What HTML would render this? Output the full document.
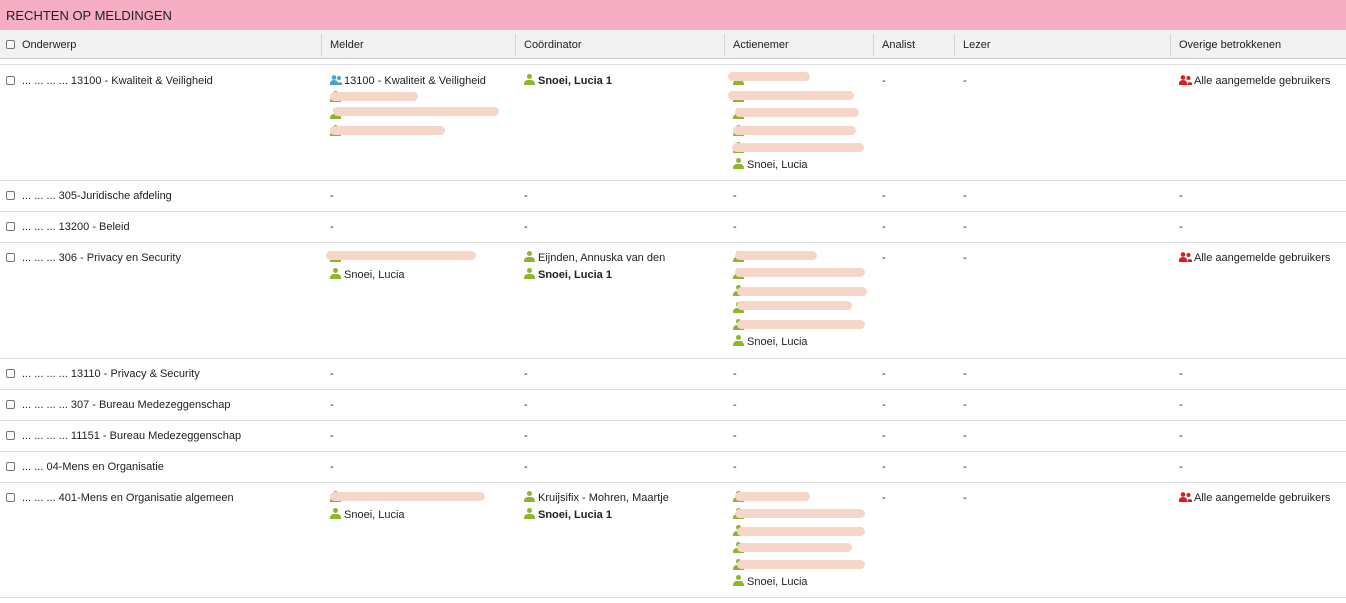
<!DOCTYPE html>
<html><head><meta charset="utf-8"><style>
*{margin:0;padding:0;box-sizing:border-box}
body{width:1346px;height:603px;background:#fff;font-family:"Liberation Sans",sans-serif;font-size:11px;color:#222;position:relative;overflow:hidden}
.a{position:absolute;white-space:nowrap;line-height:14px;margin-top:1px}
.cb{position:absolute;width:9px;height:9px;border:1px solid #777;border-radius:2px;background:#fff}
.hl{position:absolute;left:0;width:1346px;height:1px;background:#ddd}
.vl{position:absolute;top:34px;width:1px;height:22px;background:#d4d4d4}
.p{display:inline-block;width:11px;height:11px;vertical-align:-1px;margin-right:3px;position:relative}
.p:before{content:"";position:absolute;left:3px;top:0;width:5px;height:5px;border-radius:50%;background:#8fb530}
.p:after{content:"";position:absolute;left:0;top:6px;width:11px;height:5px;border-radius:4px 4px 0 0;background:#8fb530}
.r{position:absolute;height:9px;border-radius:5px;background:#f5d6c8}
b{font-weight:bold}
</style></head><body>
<div style="position:absolute;left:0;top:0;width:1346px;height:30px;background:#f5aec3"></div>
<div class="a" style="left:6px;top:7px;font-size:13px;line-height:16px;color:#222">RECHTEN OP MELDINGEN</div>
<div style="position:absolute;left:0;top:30px;width:1346px;height:29px;background:#f2f2f2;border-bottom:1px solid #ccc"></div>
<div class="hl" style="top:64px;background:#ddd"></div>
<div class="vl" style="left:321px"></div><div class="vl" style="left:515px"></div><div class="vl" style="left:724px"></div><div class="vl" style="left:873px"></div><div class="vl" style="left:954px"></div><div class="vl" style="left:1170px"></div>
<div class="cb" style="left:6px;top:40px"></div>
<div class="a" style="left:22px;top:37px">Onderwerp</div>
<div class="a" style="left:330px;top:37px">Melder</div>
<div class="a" style="left:524px;top:37px">Coördinator</div>
<div class="a" style="left:733px;top:37px">Actienemer</div>
<div class="a" style="left:882px;top:37px">Analist</div>
<div class="a" style="left:963px;top:37px">Lezer</div>
<div class="a" style="left:1179px;top:37px">Overige betrokkenen</div>

<div class="hl" style="top:180px"></div><div class="hl" style="top:211px"></div><div class="hl" style="top:242px"></div><div class="hl" style="top:358px"></div><div class="hl" style="top:389px"></div><div class="hl" style="top:420px"></div><div class="hl" style="top:451px"></div><div class="hl" style="top:482px"></div><div class="hl" style="top:597px"></div>

<div class="cb" style="left:6px;top:76px"></div>
<div class="a" style="left:22px;top:73px">... ... ... ... 13100 - Kwaliteit &amp; Veiligheid</div>
<div class="a" style="left:330px;top:73px"><svg width="12" height="10" style="vertical-align:-1px;margin-right:2px"><circle cx="4" cy="2.5" r="2.3" fill="#4a9fd0"/><path d="M0 10v-2a4 3 0 0 1 8 0v2z" fill="#4a9fd0"/><circle cx="9" cy="3" r="2" fill="#4a9fd0"/><path d="M8 10v-2a3 2.5 0 0 1 4 0v2z" fill="#4a9fd0"/></svg>13100 - Kwaliteit &amp; Veiligheid</div>
<div class="a" style="left:330px;top:90px"><span class="p"></span></div>
<div class="a" style="left:330px;top:107px"><span class="p"></span></div>
<div class="a" style="left:330px;top:124px"><span class="p"></span></div>
<div class="r" style="left:330px;top:92px;width:88px"></div>
<div class="r" style="left:333px;top:107px;width:166px"></div>
<div class="r" style="left:330px;top:126px;width:115px"></div>
<div class="a" style="left:524px;top:73px"><span class="p"></span><b>Snoei, Lucia 1</b></div>
<div class="a" style="left:733px;top:73px"><span class="p"></span></div>
<div class="a" style="left:733px;top:90px"><span class="p"></span></div>
<div class="a" style="left:733px;top:107px"><span class="p"></span></div>
<div class="a" style="left:733px;top:124px"><span class="p"></span></div>
<div class="a" style="left:733px;top:141px"><span class="p"></span></div>
<div class="a" style="left:733px;top:157px"><span class="p"></span>Snoei, Lucia</div>
<div class="r" style="left:728px;top:72px;width:82px"></div>
<div class="r" style="left:728px;top:91px;width:126px"></div>
<div class="r" style="left:735px;top:108px;width:124px"></div>
<div class="r" style="left:733px;top:126px;width:123px"></div>
<div class="r" style="left:732px;top:143px;width:132px"></div>
<div class="a" style="left:882px;top:73px">-</div><div class="a" style="left:963px;top:73px">-</div>
<div class="a" style="left:1179px;top:73px"><svg width="13" height="10" style="vertical-align:-1px;margin-right:2px"><circle cx="4" cy="2.5" r="2.3" fill="#d42020"/><path d="M0 10v-2a4 3 0 0 1 8 0v2z" fill="#d42020"/><circle cx="9.5" cy="3" r="2" fill="#d42020"/><path d="M8.5 10v-2a3 2.5 0 0 1 4.5 0v2z" fill="#d42020"/></svg>Alle aangemelde gebruikers</div>

<div class="cb" style="left:6px;top:191px"></div><div class="a" style="left:22px;top:188px">... ... ... 305-Juridische afdeling</div>
<div class="a" style="left:330px;top:188px">-</div><div class="a" style="left:524px;top:188px">-</div><div class="a" style="left:733px;top:188px">-</div><div class="a" style="left:882px;top:188px">-</div><div class="a" style="left:963px;top:188px">-</div><div class="a" style="left:1179px;top:188px">-</div>
<div class="cb" style="left:6px;top:222px"></div><div class="a" style="left:22px;top:219px">... ... ... 13200 - Beleid</div>
<div class="a" style="left:330px;top:219px">-</div><div class="a" style="left:524px;top:219px">-</div><div class="a" style="left:733px;top:219px">-</div><div class="a" style="left:882px;top:219px">-</div><div class="a" style="left:963px;top:219px">-</div><div class="a" style="left:1179px;top:219px">-</div>

<div class="cb" style="left:6px;top:253px"></div><div class="a" style="left:22px;top:250px">... ... ... 306 - Privacy en Security</div>
<div class="a" style="left:330px;top:250px"><span class="p"></span></div>
<div class="r" style="left:326px;top:251px;width:150px"></div>
<div class="a" style="left:330px;top:267px"><span class="p"></span>Snoei, Lucia</div>
<div class="a" style="left:524px;top:250px"><span class="p"></span>Eijnden, Annuska van den</div>
<div class="a" style="left:524px;top:267px"><span class="p"></span><b>Snoei, Lucia 1</b></div>
<div class="a" style="left:733px;top:250px"><span class="p"></span></div>
<div class="a" style="left:733px;top:267px"><span class="p"></span></div>
<div class="a" style="left:733px;top:284px"><span class="p"></span></div>
<div class="a" style="left:733px;top:301px"><span class="p"></span></div>
<div class="a" style="left:733px;top:318px"><span class="p"></span></div>
<div class="a" style="left:733px;top:334px"><span class="p"></span>Snoei, Lucia</div>
<div class="r" style="left:735px;top:251px;width:82px"></div>
<div class="r" style="left:735px;top:268px;width:130px"></div>
<div class="r" style="left:737px;top:287px;width:130px"></div>
<div class="r" style="left:737px;top:301px;width:115px"></div>
<div class="r" style="left:737px;top:320px;width:128px"></div>
<div class="a" style="left:882px;top:250px">-</div><div class="a" style="left:963px;top:250px">-</div>
<div class="a" style="left:1179px;top:250px"><svg width="13" height="10" style="vertical-align:-1px;margin-right:2px"><circle cx="4" cy="2.5" r="2.3" fill="#d42020"/><path d="M0 10v-2a4 3 0 0 1 8 0v2z" fill="#d42020"/><circle cx="9.5" cy="3" r="2" fill="#d42020"/><path d="M8.5 10v-2a3 2.5 0 0 1 4.5 0v2z" fill="#d42020"/></svg>Alle aangemelde gebruikers</div>

<div class="cb" style="left:6px;top:369px"></div><div class="a" style="left:22px;top:366px">... ... ... ... 13110 - Privacy &amp; Security</div>
<div class="a" style="left:330px;top:366px">-</div><div class="a" style="left:524px;top:366px">-</div><div class="a" style="left:733px;top:366px">-</div><div class="a" style="left:882px;top:366px">-</div><div class="a" style="left:963px;top:366px">-</div><div class="a" style="left:1179px;top:366px">-</div>
<div class="cb" style="left:6px;top:400px"></div><div class="a" style="left:22px;top:397px">... ... ... ... 307 - Bureau Medezeggenschap</div>
<div class="a" style="left:330px;top:397px">-</div><div class="a" style="left:524px;top:397px">-</div><div class="a" style="left:733px;top:397px">-</div><div class="a" style="left:882px;top:397px">-</div><div class="a" style="left:963px;top:397px">-</div><div class="a" style="left:1179px;top:397px">-</div>
<div class="cb" style="left:6px;top:431px"></div><div class="a" style="left:22px;top:428px">... ... ... ... 11151 - Bureau Medezeggenschap</div>
<div class="a" style="left:330px;top:428px">-</div><div class="a" style="left:524px;top:428px">-</div><div class="a" style="left:733px;top:428px">-</div><div class="a" style="left:882px;top:428px">-</div><div class="a" style="left:963px;top:428px">-</div><div class="a" style="left:1179px;top:428px">-</div>
<div class="cb" style="left:6px;top:462px"></div><div class="a" style="left:22px;top:459px">... ... 04-Mens en Organisatie</div>
<div class="a" style="left:330px;top:459px">-</div><div class="a" style="left:524px;top:459px">-</div><div class="a" style="left:733px;top:459px">-</div><div class="a" style="left:882px;top:459px">-</div><div class="a" style="left:963px;top:459px">-</div><div class="a" style="left:1179px;top:459px">-</div>

<div class="cb" style="left:6px;top:493px"></div><div class="a" style="left:22px;top:490px">... ... ... 401-Mens en Organisatie algemeen</div>
<div class="a" style="left:330px;top:490px"><span class="p"></span></div>
<div class="r" style="left:330px;top:492px;width:155px"></div>
<div class="a" style="left:330px;top:507px"><span class="p"></span>Snoei, Lucia</div>
<div class="a" style="left:524px;top:490px"><span class="p"></span>Kruijsifix - Mohren, Maartje</div>
<div class="a" style="left:524px;top:507px"><span class="p"></span><b>Snoei, Lucia 1</b></div>
<div class="a" style="left:733px;top:490px"><span class="p"></span></div>
<div class="a" style="left:733px;top:507px"><span class="p"></span></div>
<div class="a" style="left:733px;top:524px"><span class="p"></span></div>
<div class="a" style="left:733px;top:541px"><span class="p"></span></div>
<div class="a" style="left:733px;top:558px"><span class="p"></span></div>
<div class="a" style="left:733px;top:574px"><span class="p"></span>Snoei, Lucia</div>
<div class="r" style="left:735px;top:492px;width:75px"></div>
<div class="r" style="left:735px;top:509px;width:130px"></div>
<div class="r" style="left:737px;top:527px;width:128px"></div>
<div class="r" style="left:737px;top:543px;width:115px"></div>
<div class="r" style="left:737px;top:560px;width:128px"></div>
<div class="a" style="left:882px;top:490px">-</div><div class="a" style="left:963px;top:490px">-</div>
<div class="a" style="left:1179px;top:490px"><svg width="13" height="10" style="vertical-align:-1px;margin-right:2px"><circle cx="4" cy="2.5" r="2.3" fill="#d42020"/><path d="M0 10v-2a4 3 0 0 1 8 0v2z" fill="#d42020"/><circle cx="9.5" cy="3" r="2" fill="#d42020"/><path d="M8.5 10v-2a3 2.5 0 0 1 4.5 0v2z" fill="#d42020"/></svg>Alle aangemelde gebruikers</div>
</body></html>
